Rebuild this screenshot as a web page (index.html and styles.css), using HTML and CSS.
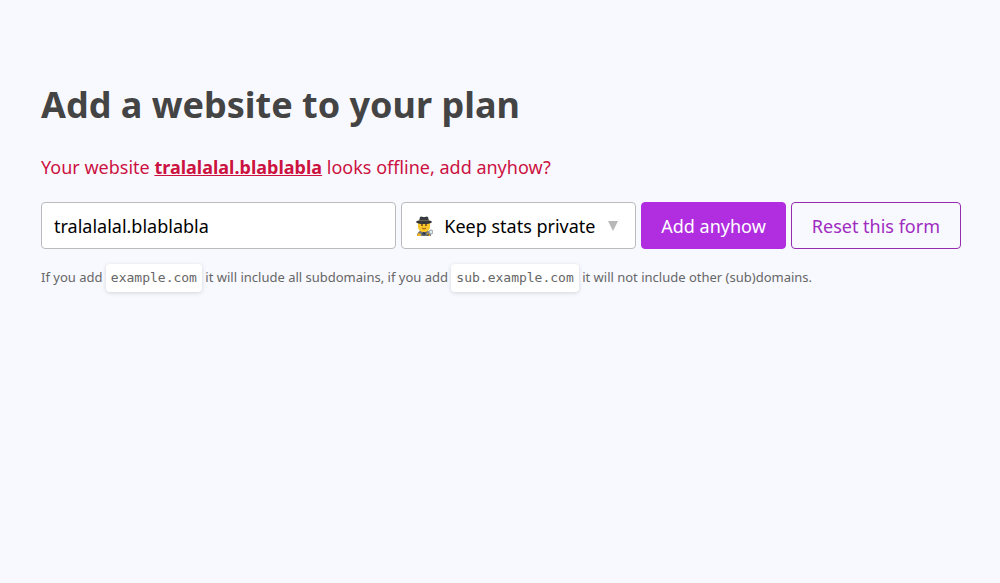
FILE: index.html
```html
<!DOCTYPE html>
<html lang="en">
<head>
    <meta charset="UTF-8">
    <meta name="viewport" content="width=device-width, initial-scale=1.0">
    <title>Add a website</title>
    <link rel="stylesheet" href="styles.css">
</head>
<body>
    <main class="container">
        <h1>Add a website to your plan</h1>
        <p class="error">Your website <a href="#">tralalalal.blablabla</a> looks offline, add anyhow?</p>
        <form class="website-form">
            <input class="field" type="text" aria-label="Website" value="tralalalal.blablabla">
            <div class="select-wrap">
                <svg class="detective" viewBox="0 0 18 20" aria-hidden="true">
                    <path d="M2 20c0-4 3-6 7-6s7 2 7 6z" fill="#71777c"/>
                    <path d="M6 13h6l-3 7z" fill="#f5f5f5"/>
                    <path d="M8 14h2l1 4-2 2-2-2z" fill="#3d434b"/>
                    <path d="M2 20l1-3 3 1v2zM12 20v-3l3 1v2z" fill="#f3b51b"/>
                    <path d="M3 6h12v5c0 3-3 5-6 5s-6-2-6-5z" fill="#fbc52c"/>
                    <circle cx="7" cy="9" r="1" fill="#62451c"/>
                    <circle cx="11" cy="9" r="1" fill="#62451c"/>
                    <path d="M7 12q2 2 4 0" fill="none" stroke="#8a5a16"/>
                    <path d="M4 5l1-4q1-1 3 0h2q2-1 3 0l1 4z" fill="#3a3d3f"/>
                    <ellipse cx="9" cy="6" rx="8" ry="2" fill="#35383a"/>
                    <path d="M4 4h10v1H4z" fill="#6b6252"/>
                    <circle cx="16" cy="16" r="2" fill="#dcebf2" stroke="#929da4"/>
                    <path d="M14 18l-2 2" stroke="#555" stroke-width="1.5"/>
                </svg>
                <select class="field" aria-label="Stats visibility">
                    <option>Keep stats private</option>
                    <option>Make stats public</option>
                </select>
                <svg class="arrow" viewBox="0 0 10 10" aria-hidden="true">
                    <path d="M0 0h10L5 10z" fill="#b8b8b8"/>
                </svg>
            </div>
            <button class="button primary" type="submit">Add anyhow</button>
            <button class="button" type="reset">Reset this form</button>
        </form>
        <p class="hint">If you add <code>example.com</code> it will include all subdomains, if you add <code>sub.example.com</code> it will not include other (sub)domains.</p>
    </main>
</body>
</html>
```
FILE: styles.css
```css
/* General Styles */
* {
    box-sizing: border-box;
}

body {
    margin: 0;
    background: #f8f9ff;
    color: #444444;
    font-family: "Noto Sans", sans-serif;
    font-size: 18px;
    line-height: 28px;
}

.container {
    padding: 79px 39px 40px 41px;
}

/* Title */
h1 {
    margin: 0 0 22px;
    font-size: 36px;
    line-height: 52px;
}

.error {
    margin: 0 0 21px;
    color: #cc123f;
}

.error a {
    color: inherit;
    font-weight: bold;
}

/* Form */
.website-form {
    display: flex;
    gap: 5px;
}

.website-form > .field {
    flex: 1;
    min-width: 0;
}

.field,
.button {
    height: 47px;
    border: 1px solid #bbbbbb;
    border-radius: 4px;
    font: inherit;
}

.field {
    padding: 0 12px;
    background: #ffffff;
    color: #000000;
}

.select-wrap {
    position: relative;
}

.select-wrap .field {
    appearance: none;
    padding: 0 39px 0 42px;
}

.detective {
    position: absolute;
    top: 14px;
    left: 14px;
    width: 18px;
    height: 20px;
    pointer-events: none;
}

.arrow {
    position: absolute;
    top: 19px;
    right: 18px;
    width: 10px;
    height: 10px;
    pointer-events: none;
}

/* Buttons */
.button {
    padding: 0 20px;
    border-color: #952bae;
    background: transparent;
    color: #a02bbf;
    white-space: nowrap;
    cursor: pointer;
}

.primary {
    padding: 0 19px;
    border-color: #b02ee0;
    background: #b02ee0;
    color: #ffffff;
}

/* Hint */
.hint {
    margin: 14px 0 0;
    color: #666666;
    font-size: 13px;
}

.hint code {
    display: inline-block;
    padding: 0 5px;
    border-radius: 4px;
    background: #ffffff;
    box-shadow: 0 1px 4px rgba(0, 0, 0, 0.15);
    font-family: "DejaVu Sans Mono", monospace;
    font-size: 13px;
}
```
